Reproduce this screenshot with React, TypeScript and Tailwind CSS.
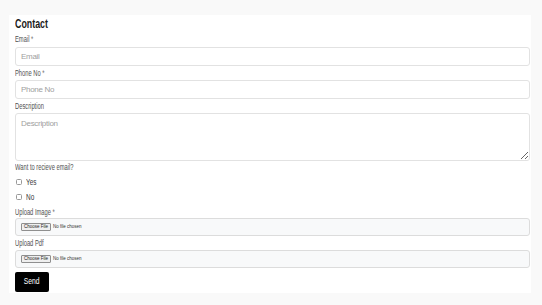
export default function App() {
  const label = "block h-[12px] text-[8.5px] leading-[12px] text-[#505050]";
  const squeeze = "inline-block origin-left scale-x-[0.68] whitespace-nowrap";
  const field =
    "block w-full rounded-[3px] border border-[#e2e2e2] bg-white px-[5px] text-[8px] tracking-[-0.3px] text-[#333] outline-none placeholder:text-[#a0a0a0]";

  return (
    <div
      className="min-h-[305px] w-[542px] bg-[#f9f9f9] pt-[15px]"
      style={{ fontFamily: '"Liberation Sans", Arial, sans-serif' }}
    >
      <form className="ml-[9px] w-[522px] bg-white pb-[1px] pl-[6px] pr-[1px]">
        <h1 className="h-[18px] pt-[1px] text-[13px] font-bold leading-[16px] text-[#1a1a1a]">
          <span className={squeeze}>Contact</span>
        </h1>

        <label className={label}>
          <span className={squeeze}>
            Email <span className="text-[#777]">*</span>
          </span>
        </label>
        <input className={`${field} mt-[2px] h-[19px]`} placeholder="Email" />

        <label className={`${label} mt-[1px] mb-[1px]`}>
          <span className={squeeze}>
            Phone No <span className="text-[#777]">*</span>
          </span>
        </label>
        <input className={`${field} h-[19px]`} placeholder="Phone No" />

        <label className={`${label} mt-[1px] mb-[1px]`}>
          <span className={squeeze}>Description</span>
        </label>
        <textarea className={`${field} h-[48px] resize-y py-[4px]`} placeholder="Description" />

        <div className={`${label} mt-0 h-[11px] leading-[11px]`}>
          <span className={squeeze}>Want to recieve email?</span>
        </div>

        <div className="flex h-[16px] items-center gap-[4px] pl-[1px] pt-[1px]">
          <span className="h-[6px] w-[6px] rounded-[1.5px] border border-[#999] bg-white" />
          <span className={`${squeeze} text-[9.5px] leading-[10px] text-[#3a3a3a]`}>Yes</span>
        </div>
        <div className="flex h-[16px] items-center gap-[4px] pl-[1px]">
          <span className="h-[6px] w-[6px] rounded-[1.5px] border border-[#999] bg-white" />
          <span className={`${squeeze} text-[9.5px] leading-[10px] text-[#3a3a3a]`}>No</span>
        </div>

        <label className={`${label} mt-[1px]`}>
          <span className={squeeze}>
            Upload Image <span className="text-[#777]">*</span>
          </span>
        </label>
        <FileField />

        <label className={`${label} mt-[1px] mb-[1px]`}>
          <span className={squeeze}>Upload Pdf</span>
        </label>
        <FileField />

        <button
          type="button"
          className="mt-[4px] flex h-[20px] w-[34px] items-center justify-center rounded-[2px] bg-black text-[9px] text-white"
        >
          <span className="inline-block scale-x-[0.75]">Send</span>
        </button>
      </form>
    </div>
  );
}

function FileField() {
  return (
    <div className="flex h-[18px] w-full items-center gap-[2px] rounded-[3px] border border-[#dcdcdc] bg-[#f8f9fa] px-[5px]">
      <span className="rounded-[1px] border border-[#8f8f8f] bg-[#efefef] px-[2px] text-[4.5px] leading-[6px] text-[#222]">
        Choose File
      </span>
      <span className="text-[4.5px] leading-[6px] text-[#333]">No file chosen</span>
    </div>
  );
}
